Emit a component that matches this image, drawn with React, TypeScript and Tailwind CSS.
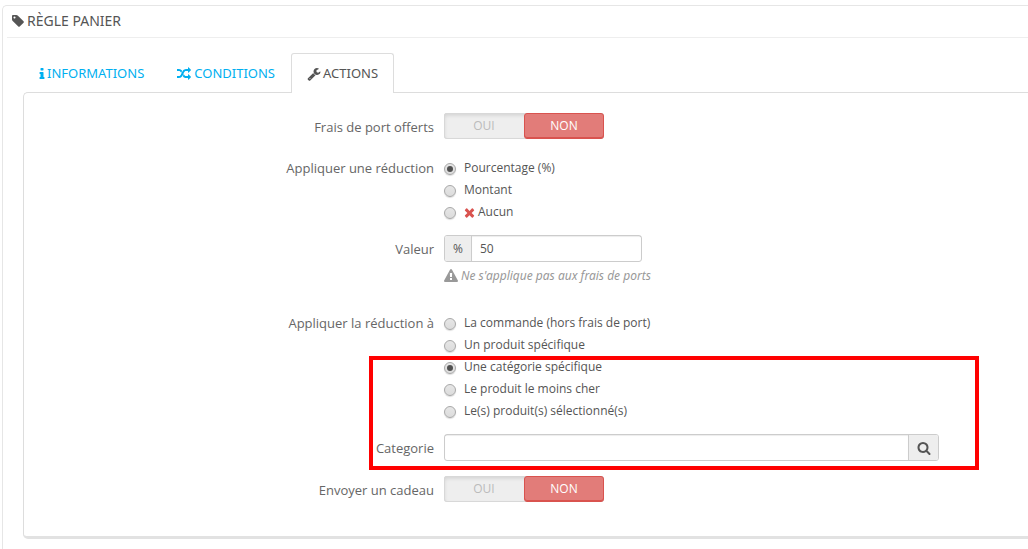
import { useState } from 'react'
import type { ReactNode } from 'react'

// Font Awesome 4 glyphs, 1792 units per em
const ICONS = {
  tag: "M576 448q0-53-37.5-90.5t-90.5-37.5-90.5 37.5-37.5 90.5 37.5 90.5 90.5 37.5 90.5-37.5 37.5-90.5zm1067 576q0 53-37 90l-491 492q-39 37-91 37-53 0-90-37l-715-716q-38-37-64.5-101t-26.5-117v-416q0-52 38-90t90-38h416q53 0 117 26.5t102 64.5l715 714q37 39 37 91z",
  info: "M1216 1344v128q0 26-19 45t-45 19h-512q-26 0-45-19t-19-45v-128q0-26 19-45t45-19h64v-384h-64q-26 0-45-19t-19-45v-128q0-26 19-45t45-19h384q26 0 45 19t19 45v576h64q26 0 45 19t19 45zm-128-1152v192q0 26-19 45t-45 19h-256q-26 0-45-19t-19-45v-192q0-26 19-45t45-19h256q26 0 45 19t19 45z",
  random: "M666 481q-60 92-137 273-22-45-37-72.5t-40.5-63.5-51-56.5-63-35-81.5-14.5h-224q-14 0-23-9t-9-23v-192q0-14 9-23t23-9h224q250 0 410 225zm1126 799q0 14-9 23l-320 320q-9 9-23 9-13 0-22.5-9.5t-9.5-22.5v-192q-32 0-85 .5t-81 1-73-1-71-5-64-10.5-63-18.5-58-28.5-59-40-55-53.5-56-69.5q59-93 136-273 22 45 37 72.5t40.5 63.5 51 56.5 63 35 81.5 14.5h256v-192q0-14 9-23t23-9q12 0 24 10l319 319q9 9 9 23zm0-896q0 14-9 23l-320 320q-9 9-23 9-13 0-22.5-9.5t-9.5-22.5v-192h-256q-48 0-87 15t-69 45-51 61.5-45 77.5q-32 62-78 171-29 66-49.5 111t-54 105-64 100-74 83-90 68.5-106.5 42-128 16.5h-224q-14 0-23-9t-9-23v-192q0-14 9-23t23-9h224q48 0 87-15t69-45 51-61.5 45-77.5q32-62 78-171 29-66 49.5-111t54-105 64-100 74-83 90-68.5 106.5-42 128-16.5h256v-192q0-14 9-23t23-9q12 0 24 10l319 319q9 9 9 23z",
  wrench: "M448 1472q0-26-19-45t-45-19-45 19-19 45 19 45 45 19 45-19 19-45zm644-420l-682 682q-37 37-90 37-52 0-91-37l-106-108q-38-36-38-90 0-53 38-91l681-681q39 98 114.5 173.5t173.5 114.5zm634-435q0 39-23 106-47 134-164.5 217.5t-258.5 83.5q-185 0-316.5-131.5t-131.5-316.5 131.5-316.5 316.5-131.5q58 0 121.5 16.5t107.5 46.5q16 11 16 28t-16 28l-293 169v224l193 107q5-3 79-48.5t135.5-81 70.5-35.5q15 0 23.5 10t8.5 25z",
  times: "M1490 1322q0 40-28 68l-136 136q-28 28-68 28t-68-28l-294-294-294 294q-28 28-68 28t-68-28l-136-136q-28-28-28-68t28-68l294-294-294-294q-28-28-28-68t28-68l136-136q28-28 68-28t68 28l294 294 294-294q28-28 68-28t68 28l136 136q28 28 28 68t-28 68l-294 294 294 294q28 28 28 68z",
  warning: "M1024 1375v-190q0-14-9.5-23.5t-22.5-9.5h-192q-13 0-22.5 9.5t-9.5 23.5v190q0 14 9.5 23.5t22.5 9.5h192q13 0 22.5-9.5t9.5-23.5zm-2-374l18-459q0-12-10-19-13-11-24-11h-220q-11 0-24 11-10 7-10 21l17 457q0 10 10 16.5t24 6.5h185q14 0 23.5-6.5t10.5-16.5zm-14-934l768 1408q35 63-2 126-17 29-46.5 46t-63.5 17h-1536q-34 0-63.5-17t-46.5-46q-37-63-2-126l768-1408q17-31 47-49t65-18 65 18 47 49z",
  search: "M1216 832q0-185-131.5-316.5t-316.5-131.5-316.5 131.5-131.5 316.5 131.5 316.5 316.5 131.5 316.5-131.5 131.5-316.5zm512 832q0 52-38 90t-90 38q-54 0-90-38l-343-342q-179 124-399 124-143 0-273.5-55.5t-225-150-150-225-55.5-273.5 55.5-273.5 150-225 225-150 273.5-55.5 273.5 55.5 225 150 150 225 55.5 273.5q0 220-124 399l343 343q37 37 37 90z",
}

const Icon = ({ name, className, viewBox = "0 0 1792 1792" }: { name: keyof typeof ICONS; className: string; viewBox?: string }) => (
  <svg viewBox={viewBox} fill="currentColor" aria-hidden="true" className={`shrink-0 ${className}`}>
    <path d={ICONS[name]} />
  </svg>
)

const LABEL = "w-[410px] shrink-0 text-right text-[13px] leading-5 text-[#666666]"

const Row = ({ label, htmlFor, className, children }: { label: string; htmlFor: string; className?: string; children: ReactNode }) => (
  <div className={`flex items-start ${className ?? ""}`}>
    <label htmlFor={htmlFor} className={`${LABEL} pt-1`}>{label}</label>
    <div className="ml-[10px] min-w-0 flex-1">{children}</div>
  </div>
)

const Switch = ({ id }: { id: string }) => {
  const [on, setOn] = useState(false)
  const base = "h-[26px] flex-1 border pb-px text-xs"
  const off = "border-transparent text-[#bbbbbb]"
  return (
    <div className="flex w-40 rounded-[3px] bg-[#eeeeee] shadow-[inset_0_0_0_1px_#d8d8d8,inset_0_2px_4px_#00000022]">
      <button id={id} type="button" onClick={() => setOn(true)} className={`${base} ${on ? "rounded-[3px] border-[#72c279] bg-[#92d097] text-white" : off}`}>OUI</button>
      <button type="button" onClick={() => setOn(false)} className={`${base} ${on ? off : "rounded-[3px] border-[#d9534f] bg-[#e27c79] text-white shadow-[inset_0_-1px_0_#d9534f]"}`}>NON</button>
    </div>
  )
}

const RadioGroup = ({ label, name, options, initial, className }: { label: string; name: string; options: string[]; initial: string; className?: string }) => {
  const [value, setValue] = useState(initial)
  return (
    <div role="radiogroup" aria-labelledby={`${name}-label`} className={`flex items-start ${className ?? ""}`}>
      <span id={`${name}-label`} className={`${LABEL} pt-px`}>{label}</span>
      <div className="ml-[10px] min-w-0 flex-1">
        {options.map(option => (
          <label key={option} className="flex h-[22px] items-center text-xs">
            <input
              type="radio"
              name={name}
              checked={value === option}
              onChange={() => setValue(option)}
              className="mt-[2px] mr-2 grid size-3 appearance-none place-items-center rounded-full border border-[#a8a8a8] bg-linear-to-b from-[#e6e6e6] to-[#dcdcdc] shadow-[0_1px_1px_#00000022] before:size-[6px] before:rounded-full checked:before:bg-[#505050]"
            />
            {option === "Aucun" && <Icon name="times" viewBox="192 192 1408 1408" className="mr-[3px] size-[11px] text-[#d9534f]" />}
            {option}
          </label>
        ))}
      </div>
    </div>
  )
}

export default function App() {
  const [amount, setAmount] = useState("50")
  const [category, setCategory] = useState("")

  return (
    <main className="overflow-hidden bg-white pt-[5px] pl-[2px] font-['Open_Sans',sans-serif] text-[#555555]">
      <section className="rounded-tl-[5px] border-t border-l border-[#e6e6e6] pb-4 pl-1">
        <h1 className="flex h-8 items-center border-b border-[#eeeeee] pb-[2px] pl-1 font-['Noto_Sans',sans-serif] text-sm">
          <Icon name="tag" className="mr-[2px] size-[14px]" />
          RÈGLE PANIER
        </h1>

        <nav className="mt-[15px] ml-4 flex font-['Noto_Sans',sans-serif] text-[13px]">
          <a href="#informations" className="flex h-10 items-center border border-b-0 border-transparent px-[15px] text-[#00aff0]">
            <Icon name="info" viewBox="512 0 768 1792" className="mr-[2px] h-[14px] w-[6px]" />
            INFORMATIONS
          </a>
          <a href="#conditions" className="flex h-10 items-center border border-b-0 border-transparent pr-[15px] pl-4 text-[#00aff0]">
            <Icon name="random" className="mr-[3px] size-[14px]" />
            CONDITIONS
          </a>
          <a href="#actions" aria-current="page" className="relative z-10 flex h-10 items-center rounded-t-[3px] border border-b-0 border-[#dddddd] bg-white px-[15px]">
            <Icon name="wrench" className="mr-[2px] size-[14px]" />
            ACTIONS
          </a>
        </nav>

        <form className="relative -mt-px ml-4 rounded-l-[5px] border border-r-0 border-b-[3px] border-[#dddddd] border-b-[#e2e2e2] pt-5 pb-[34px]">
          <Row label="Frais de port offerts" htmlFor="free-shipping" className="mb-[18px]">
            <Switch id="free-shipping" />
          </Row>

          <RadioGroup
            label="Appliquer une réduction"
            name="reduction"
            options={["Pourcentage (%)", "Montant", "Aucun"]}
            initial="Pourcentage (%)"
            className="mb-3"
          />

          <Row label="Valeur" htmlFor="amount" className="mb-[26px]">
            <div className="flex h-[27px] w-[198px] rounded-[3px] border border-[#cccccc] text-xs">
              <span className="flex w-[27px] items-center justify-center rounded-l-[2px] border-r border-[#cccccc] bg-[#eeeeee]">%</span>
              <input id="amount" value={amount} onChange={e => setAmount(e.target.value)} className="min-w-0 flex-1 px-2 shadow-[inset_0_1px_1px_#00000013] outline-none" />
            </div>
            <p className="mt-1 flex h-5 items-center font-['Noto_Sans',sans-serif] text-xs text-[#999999] italic">
              <Icon name="warning" className="mr-[3px] size-[14px]" />
              Ne s'applique pas aux frais de ports
            </p>
          </Row>

          <div className="relative">
            <RadioGroup
              label="Appliquer la réduction à"
              name="target"
              options={["La commande (hors frais de port)", "Un produit spécifique", "Une catégorie spécifique", "Le produit le moins cher", "Le(s) produit(s) sélectionné(s)"]}
              initial="Une catégorie spécifique"
              className="mb-3"
            />

            <Row label="Categorie" htmlFor="category" className="mb-[15px]">
              <div className="flex h-[27px] max-w-[495px] rounded-[3px] border border-[#cccccc] text-xs">
                <input id="category" value={category} onChange={e => setCategory(e.target.value)} className="min-w-0 flex-1 px-2 shadow-[inset_0_1px_1px_#00000013] outline-none" />
                <button type="button" aria-label="Rechercher" className="flex w-[30px] items-center justify-center rounded-r-[2px] border-l border-[#cccccc] bg-[#eeeeee]">
                  <Icon name="search" className="size-[14px]" />
                </button>
              </div>
            </Row>

            {/* Highlight frame around the category choice */}
            <div className="pointer-events-none absolute top-11 -bottom-[9px] left-[345px] w-[610px] border-4 border-[#ff0000]" />
          </div>

          <Row label="Envoyer un cadeau" htmlFor="gift">
            <Switch id="gift" />
          </Row>
        </form>
      </section>
    </main>
  )
}
